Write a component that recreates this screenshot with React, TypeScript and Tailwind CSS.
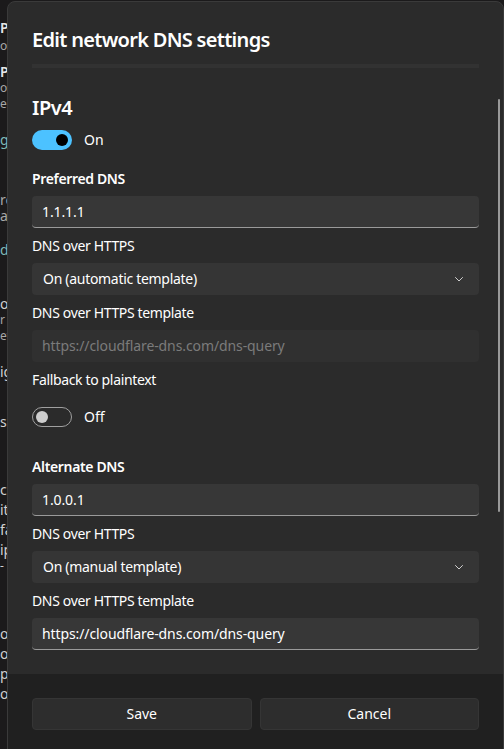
import React from 'react';

const font = { fontFamily: '"Segoe UI", "Noto Sans", "Open Sans", sans-serif' };

// Bits of the settings page that peek out from behind the dialog
const pageLines: { text: string; top: string; cls: string }[] = [
  { text: 'Pu', top: 'mt-[20px]', cls: 'text-[#e6e6e6] font-semibold text-sm' },
  { text: 'o', top: 'mt-[2px]', cls: 'text-[#a8a8a8] text-xs' },
  { text: 'Pr', top: 'mt-[10px]', cls: 'text-[#e6e6e6] font-semibold text-sm' },
  { text: 'o', top: 'mt-0', cls: 'text-[#a8a8a8] text-xs' },
  { text: 'e', top: 'mt-0', cls: 'text-[#a8a8a8] text-xs' },
  { text: 'g', top: 'mt-[20px]', cls: 'text-[#7fb8b8] text-sm' },
  { text: 're', top: 'mt-[44px]', cls: 'text-[#a8a8a8] text-sm' },
  { text: 'ap', top: 'mt-0', cls: 'text-[#a8a8a8] text-sm' },
  { text: 'd', top: 'mt-[18px]', cls: 'text-[#7fb8b8] text-sm' },
  { text: 'or', top: 'mt-[38px]', cls: 'text-[#d0d0d0] text-sm' },
  { text: 'r', top: 'mt-0', cls: 'text-[#a8a8a8] text-xs' },
  { text: 'ef', top: 'mt-0', cls: 'text-[#a8a8a8] text-xs' },
  { text: 'ig', top: 'mt-[20px]', cls: 'text-[#d0d0d0] text-sm' },
  { text: 'se', top: 'mt-[34px]', cls: 'text-[#d0d0d0] text-sm' },
  { text: 'c', top: 'mt-[52px]', cls: 'text-[#d0d0d0] text-sm' },
  { text: 'it', top: 'mt-[4px]', cls: 'text-[#d0d0d0] text-sm' },
  { text: 'fa', top: 'mt-[4px]', cls: 'text-[#d0d0d0] text-sm' },
  { text: 'ip', top: 'mt-[4px]', cls: 'text-[#d0d0d0] text-sm' },
  { text: '-', top: 'mt-0', cls: 'text-[#d0d0d0] text-xs' },
  { text: 'o', top: 'mt-[52px]', cls: 'text-[#d0d0d0] text-sm' },
  { text: 'o', top: 'mt-[4px]', cls: 'text-[#d0d0d0] text-sm' },
  { text: 'p', top: 'mt-[4px]', cls: 'text-[#d0d0d0] text-sm' },
  { text: 'o', top: 'mt-[4px]', cls: 'text-[#d0d0d0] text-sm' },
];

const Chevron = () => (
  <svg width="12" height="12" viewBox="0 0 12 12" fill="none">
    <path d="M2.5 4.5L6 8L9.5 4.5" stroke="#cfcfcf" strokeWidth="1" strokeLinecap="round" strokeLinejoin="round" />
  </svg>
);

const Label: React.FC<{ children: React.ReactNode; strong?: boolean; className?: string }> = ({ children, strong, className }) => (
  <div className={`h-5 text-sm leading-5 tracking-[-0.35px] text-white ${strong ? 'font-semibold' : ''} ${className ?? ''}`}>{children}</div>
);

const TextBox: React.FC<{ value: string; disabled?: boolean; className?: string }> = ({ value, disabled, className }) => (
  <div
    className={`h-8 rounded-[4px] flex items-center px-[10px] text-sm tracking-[-0.1px] ${
      disabled
        ? 'bg-[#303030] text-[#7b7b7b]'
        : 'bg-[#373737] text-white border-b border-[#9a9a9a]'
    } ${className ?? ''}`}
  >
    {value}
  </div>
);

const Select: React.FC<{ value: string; className?: string }> = ({ value, className }) => (
  <div className={`h-8 rounded-[4px] bg-[#353535] flex items-center justify-between pl-[11px] pr-[14px] text-sm tracking-[-0.3px] text-white ${className ?? ''}`}>
    <span>{value}</span>
    <Chevron />
  </div>
);

const Toggle: React.FC<{ on: boolean; className?: string }> = ({ on, className }) => (
  <div className={`flex items-center h-5 ${className ?? ''}`}>
    {on ? (
      <div className="w-10 h-5 rounded-full bg-[#4cc2ff] flex items-center justify-end pr-[4px]">
        <div className="w-3 h-3 rounded-full bg-black" />
      </div>
    ) : (
      <div className="w-10 h-5 rounded-full border border-[#a0a0a0] flex items-center pl-[3px]">
        <div className="w-3 h-3 rounded-full bg-[#cecece]" />
      </div>
    )}
    <span className="ml-3 text-sm text-white">{on ? 'On' : 'Off'}</span>
  </div>
);

export default function App() {
  return (
    <div className="relative w-[504px] h-[749px] overflow-hidden bg-[#1b1a1b]" style={font}>
      {/* page behind */}
      <div className="w-[7px] h-full overflow-hidden flex flex-col">
        {pageLines.map((l, i) => (
          <div key={i} className={`${l.top} ${l.cls} leading-4 whitespace-nowrap`}>
            {l.text}
          </div>
        ))}
      </div>

      {/* dialog */}
      <div className="absolute left-[7px] top-[1px] w-[497px] h-[760px] rounded-t-[8px] border border-[#3a3a3a] bg-[#2b2b2b] flex flex-col overflow-hidden">
        <div className="px-6 pt-[24px] shrink-0">
          <div className="text-[20px] leading-7 font-semibold tracking-[-0.7px] text-white">Edit network DNS settings</div>
          <div className="mt-[10px] h-[4px] bg-[#323232]" />
        </div>

        <div className="relative h-[606px] shrink-0 overflow-hidden">
          {/* scroll thumb */}
          <div className="absolute right-[3px] top-[31px] w-[2px] h-[413px] rounded-full bg-[#9a9a9a]" />

          <div className="px-6 pt-[26px]">
            <div className="text-[20px] leading-7 font-semibold tracking-[-0.5px] text-white">IPv4</div>
            <Toggle on className="mt-[8px]" />

            <Label strong className="mt-[19px]">Preferred DNS</Label>
            <TextBox value="1.1.1.1" className="mt-[7px]" />
            <Label className="mt-[8px]">DNS over HTTPS</Label>
            <Select value="On (automatic template)" className="mt-[7px]" />
            <Label className="mt-[8px]">DNS over HTTPS template</Label>
            <TextBox value="https://cloudflare-dns.com/dns-query" disabled className="mt-[7px]" />
            <Label className="mt-[8px]">Fallback to plaintext</Label>
            <Toggle on={false} className="mt-[17px]" />

            <Label strong className="mt-[30px]">Alternate DNS</Label>
            <TextBox value="1.0.0.1" className="mt-[7px]" />
            <Label className="mt-[8px]">DNS over HTTPS</Label>
            <Select value="On (manual template)" className="mt-[7px]" />
            <Label className="mt-[8px]">DNS over HTTPS template</Label>
            <TextBox value="https://cloudflare-dns.com/dns-query" className="mt-[7px]" />
          </div>
        </div>

        <div className="flex-1 bg-[#202020] px-6 pt-[24px] grid grid-cols-2 gap-2 content-start">
          <button className="h-8 rounded-[4px] bg-[#2d2d2d] border border-[#353535] text-sm text-white">Save</button>
          <button className="h-8 rounded-[4px] bg-[#2d2d2d] border border-[#353535] text-sm text-white">Cancel</button>
        </div>
      </div>
    </div>
  );
}
